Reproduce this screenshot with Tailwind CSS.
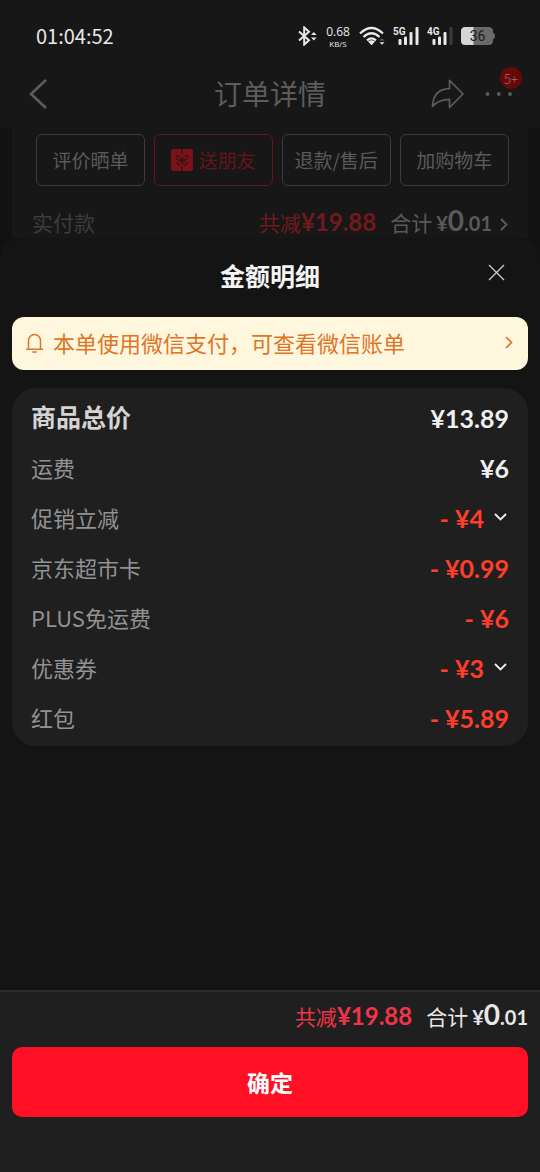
<!DOCTYPE html>
<html lang="zh-CN">
<head>
<meta charset="utf-8">
<meta name="viewport" content="width=device-width, initial-scale=1">
<title>订单详情</title>
<script src="https://cdn.jsdelivr.net/npm/@tailwindcss/browser@4"></script>
</head>
<body class="flex min-h-screen flex-col bg-[#111111] font-['Noto_Sans_CJK_SC',sans-serif] font-light text-[#e8e8e8]">

<header class="bg-[#171717]">
  <div class="flex h-16 items-center justify-between pt-2 pr-[45px] pl-9">
    <time class="text-[20px] leading-6 font-normal">01:04:52</time>
    <div class="flex items-center gap-2">
      <svg class="h-[20px] w-[20px]" viewBox="0 0 20 20" fill="none" stroke="#e8e8e8" stroke-width="2" aria-label="蓝牙">
        <path d="M2 5.5 12 14.2 7.2 18.6V1.4L12 5.8 2 14.5"/>
        <path d="M14 9 16.8 6 19.6 9ZM14 11.500 16.8 14.500 19.6 11.500Z" fill="#e8e8e8" stroke="none"/>
      </svg>
      <div class="flex w-[26px] flex-col items-center font-['Open_Sans',sans-serif] font-normal">
        <span class="text-[12px] leading-[14px]">0.68</span>
        <span class="text-[8px] leading-[9px]">KB/S</span>
      </div>
      <svg class="h-[20px] w-[26px]" viewBox="0 0 26 20" fill="none" stroke="#e8e8e8" stroke-width="2.200" aria-label="无线网络">
        <path d="M1 7.500Q12.500-3.500 24 7.500M4.500 11Q12.500 3.500 20.500 11M8 14.300Q12.500 10.500 17 14.300"/>
        <path d="M9 15.500Q12.500 13 16 15.500L12.500 19.200Z" fill="#e8e8e8" stroke="none"/>
        <path d="M20.500 14.500 23 12.500 25.500 14.500Z" fill="#666666" stroke="none"/>
        <path d="M20.500 16.200H25.500L23 18.800Z" fill="#e8e8e8" stroke="none"/>
      </svg>
      <svg class="h-[20px] w-[26px]" viewBox="0 0 26 20" fill="#e8e8e8" aria-label="5G 信号">
        <text x="0" y="9" font-family="Roboto, sans-serif" font-size="10" font-weight="700">5G</text>
        <rect x="5.500" y="13" width="3" height="6" rx="1"/><rect x="11" y="10.500" width="3" height="8.500" rx="1"/><rect x="16.500" y="6" width="3" height="13" rx="1"/><rect x="22.500" y="1" width="3" height="18" rx="1"/>
      </svg>
      <svg class="h-[20px] w-[26px]" viewBox="0 0 26 20" fill="#e8e8e8" aria-label="4G 信号">
        <text x="0" y="9" font-family="Roboto, sans-serif" font-size="10" font-weight="700">4G</text>
        <rect x="5.500" y="13" width="3" height="6" rx="1"/><rect x="11" y="10.500" width="3" height="8.500" rx="1"/><rect x="16.500" y="6" width="3" height="13" rx="1"/><rect x="22.500" y="1" width="3" height="18" rx="1" fill="#3c3c3c"/>
      </svg>
      <svg class="h-[18px] w-[34px]" viewBox="0 0 34 18" aria-label="电量 36%">
        <path d="M4.500 0H27.500Q32 0 32 4.500V5.500Q34 6 34 9T32 12.500V13.500Q32 18 27.500 18H4.500Q0 18 0 13.500V4.500Q0 0 4.500 0Z" fill="#6a6a6a"/>
        <path d="M4.500 0H12.500V18H4.500Q0 18 0 13.500V4.500Q0 0 4.500 0Z" fill="#d6d6d6"/>
        <text x="16.500" y="14" text-anchor="middle" font-family="Roboto, sans-serif" font-size="14" font-weight="400" fill="#1c1c1c">36</text>
      </svg>
    </div>
  </div>

  <div class="grid h-16 grid-cols-[100px_1fr_100px] items-center px-2 pb-1 text-[#5c5c5c]">
    <button type="button" aria-label="返回" class="flex h-12 w-12 items-center pl-[21px]">
      <svg class="h-[30px] w-[18px]" viewBox="0 0 18 30" fill="none" stroke="currentColor" stroke-width="2.600"><path d="M17 1 2 15 17 29"/></svg>
    </button>
    <h1 class="pb-0.5 text-center text-[28px] leading-8 font-normal">订单详情</h1>
    <div class="flex items-center justify-end gap-5 pr-[18px]">
      <button type="button" aria-label="分享">
        <svg class="h-[30px] w-[33px]" viewBox="0 0 33 30" fill="none" stroke="currentColor" stroke-width="1.700" stroke-linejoin="round"><path d="M18.500 1.300 32 15 18.500 28.500V20.300C11 20.300 6 22 1.500 27.500C2 16 8 10 18.500 9.700Z"/></svg>
      </button>
      <button type="button" aria-label="更多" class="relative">
        <svg class="h-[30px] w-[30px]" viewBox="0 0 30 30" fill="currentColor"><circle cx="3.500" cy="15" r="1.900"/><circle cx="14.800" cy="15" r="1.900"/><circle cx="26" cy="15" r="1.900"/></svg>
        <span class="absolute -top-3 -right-2 flex h-[22px] w-[22px] items-center justify-center rounded-full bg-[#650909] text-[13px] leading-none text-[#a86a6a]">5+</span>
      </button>
    </div>
  </div>
</header>

<section class="mx-3 bg-[#171717] pt-1.5 text-[#5a5a5a]">
  <div class="grid grid-cols-[109fr_118fr_109fr_109fr] gap-[9px] pr-[19px] pl-6 text-[19px] leading-6 font-normal whitespace-nowrap">
    <button type="button" class="h-[52px] rounded-md border border-[#3c3c3c]">评价晒单</button>
    <button type="button" class="flex h-[52px] items-center justify-center gap-1.5 rounded-md border border-[#661419] text-[#661419]">
      <svg class="h-[22px] w-[22px]" viewBox="0 0 22 22" aria-hidden="true"><rect width="22" height="22" rx="2" fill="#7c1119"/><path d="M11 0V5M11 17V22M11 11C8 5 4.500 6 5 8.500S8.500 11 11 11C14 5 17.500 6 17 8.500S13.500 11 11 11C7 12 5 14 6.500 15.500S10.500 14 11 11C15 12 17 14 15.500 15.500S11.500 14 11 11" fill="none" stroke="#171717" stroke-width="1"/></svg>
      送朋友
    </button>
    <button type="button" class="h-[52px] rounded-md border border-[#3c3c3c]">退款/售后</button>
    <button type="button" class="h-[52px] rounded-md border border-[#3c3c3c]">加购物车</button>
  </div>
  <div class="mt-[18px] mb-0.5 flex h-8 items-baseline justify-between pr-5 pl-5 text-[21px] leading-8 font-normal">
    <span class="text-[#3c3c3c]">实付款</span>
    <div class="flex items-baseline">
      <span class="text-[#73191e]">共减<span class="font-[Lato] text-[24px] font-bold">¥19.88</span></span>
      <span class="ml-3.5">合计</span>
      <span class="ml-1 font-[Lato] text-[20px] font-bold">¥<span class="text-[28px]">0</span>.01</span>
      <svg class="ml-2 h-[13px] w-[8px]" viewBox="0 0 8 13" fill="none" stroke="currentColor" stroke-width="2"><path d="M1 1 6.500 6.500 1 12"/></svg>
    </div>
  </div>
</section>

<main role="dialog" aria-labelledby="sheet-title" class="flex flex-1 flex-col rounded-t-[20px] bg-[#141414]">
  <div class="mb-[5px] grid h-[74px] grid-cols-[48px_1fr_48px] items-center px-5">
    <h2 id="sheet-title" class="col-start-2 text-center text-[25px] leading-8 font-bold text-[#f4f4f4]">金额明细</h2>
    <button type="button" aria-label="关闭" class="flex h-12 w-12 items-center justify-center pb-1.5">
      <svg class="h-[17px] w-[17px]" viewBox="0 0 17 17" stroke="#c8c8c8" stroke-width="1.400"><path d="M1 1 16 16M16 1 1 16"/></svg>
    </button>
  </div>

  <a href="#bill" class="mx-3 flex h-[53px] items-center rounded-xl bg-[#fff6de] pr-[15px] pb-0.5 pl-3.5 text-[22px] leading-8 font-normal text-[#e07526]">
    <svg class="mr-2.5 h-[20px] w-[17px]" viewBox="0 0 17 20" fill="none" stroke="currentColor" stroke-width="1.500" aria-hidden="true"><path d="M0 16.200H17M2.500 16V7.500A6 6 0 0 1 14.500 7.500V16M6.200 19H10.800"/></svg>
    <span class="pb-0.5">本单使用微信支付，可查看微信账单</span>
    <svg class="ml-auto h-[13px] w-[8px]" viewBox="0 0 8 13" fill="none" stroke="currentColor" stroke-width="1.700" aria-hidden="true"><path d="M1 1 6.500 6.500 1 12"/></svg>
  </a>

  <dl class="mx-3 mt-[18px] rounded-[24px] bg-[#1f1f1f] py-1 pr-[19px] pl-[19px] text-[22px] font-normal text-[#929292] [&_dd]:pt-1 [&_dd]:font-[Lato] [&_dd]:text-[25px] [&_dd]:font-bold [&_dd]:text-[#ff3d2b] [&>div]:flex [&>div]:h-[50px] [&>div]:items-center [&>div]:justify-between">
    <div><dt class="text-[25px] font-bold text-[#d4d4d4]">商品总价</dt><dd class="text-[#f0f0f0]!">¥13.89</dd></div>
    <div><dt>运费</dt><dd class="text-[#f0f0f0]!">¥6</dd></div>
    <div><dt>促销立减</dt><dd><button type="button" class="flex items-center gap-2.5">- ¥4<svg class="mr-0.5 mb-1 h-[8px] w-[13px]" viewBox="0 0 13 8" fill="none" stroke="#f0f0f0" stroke-width="1.800"><path d="M1 1 6.500 6.500 12 1"/></svg></button></dd></div>
    <div><dt>京东超市卡</dt><dd>- ¥0.99</dd></div>
    <div><dt>PLUS免运费</dt><dd>- ¥6</dd></div>
    <div><dt>优惠券</dt><dd><button type="button" class="flex items-center gap-2.5">- ¥3<svg class="mr-0.5 mb-1 h-[8px] w-[13px]" viewBox="0 0 13 8" fill="none" stroke="#f0f0f0" stroke-width="1.800"><path d="M1 1 6.500 6.500 12 1"/></svg></button></dd></div>
    <div><dt>红包</dt><dd>- ¥5.89</dd></div>
  </dl>
</main>

<footer class="border-t-2 border-[#2b2b2b] bg-[#1f1f1f] px-3 pt-1.5 pb-[55px]">
  <div class="flex h-8 items-baseline justify-end text-[21px] leading-8 font-normal">
    <span class="text-[#f03447]">共减<span class="font-[Lato] text-[24px] font-bold">¥19.88</span></span>
    <span class="ml-3.5">合计</span>
    <span class="ml-1 font-[Lato] text-[20px] font-bold">¥<span class="text-[28px]">0</span>.01</span>
  </div>
  <button type="button" class="mt-[17px] block h-[70px] w-full rounded-[10px] bg-[#ff1024] text-[23px] font-bold text-white">确定</button>
</footer>
</body>
</html>
